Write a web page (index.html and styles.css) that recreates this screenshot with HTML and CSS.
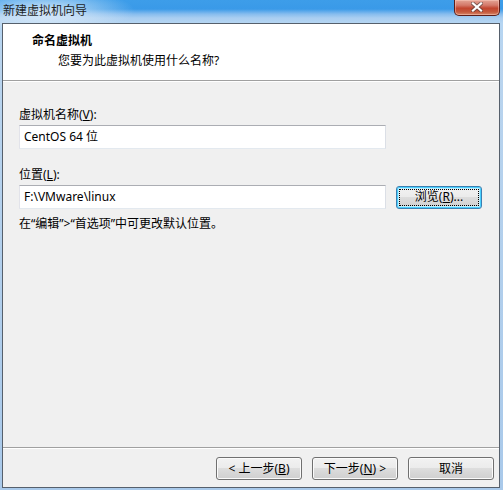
FILE: index.html
```html
<!DOCTYPE html>
<html lang="zh-CN">
<head>
<meta charset="utf-8">
<title>新建虚拟机向导</title>
<link rel="stylesheet" href="styles.css">
</head>
<body>
<div class="window">
  <div class="titlebar">
    <span class="title">新建虚拟机向导</span>
    <div class="close">
      <svg width="12" height="10" viewBox="0 0 12 10">
        <path d="M2 1.5 L10 8.5 M10 1.5 L2 8.5" stroke="#3a3a3a" stroke-width="4" stroke-linecap="square" fill="none" opacity="0.55"/>
        <path d="M2 1.5 L10 8.5 M10 1.5 L2 8.5" stroke="#ffffff" stroke-width="2.2" stroke-linecap="square" fill="none"/>
      </svg>
    </div>
  </div>
  <div class="client">
    <div class="header">
      <div class="h-title">命名虚拟机</div>
      <div class="h-sub">您要为此虚拟机使用什么名称?</div>
    </div>
    <div class="body">
      <div class="lbl">虚拟机名称(<u>V</u>):</div>
      <div class="input wide">CentOS 64 位</div>
      <div class="lbl lbl2">位置(<u>L</u>):</div>
      <div class="row">
        <div class="input wide">F:\VMware\linux</div>
        <div class="btn focus">浏览(<u>R</u>)...</div>
      </div>
      <div class="hint">在“编辑”&gt;“首选项”中可更改默认位置。</div>
    </div>
    <div class="footer">
      <div class="btn">&lt; 上一步(<u>B</u>)</div>
      <div class="btn">下一步(<u>N</u>) &gt;</div>
      <div class="btn">取消</div>
    </div>
  </div>
</div>
</body>
</html>
```
FILE: styles.css
```css
* { box-sizing: border-box; }
html, body { margin: 0; padding: 0; }
body {
  width: 503px;
  height: 490px;
  overflow: hidden;
  font-family: "Noto Sans", "Noto Sans CJK SC", sans-serif;
  font-size: 12px;
  line-height: 16px;
  color: #000;
}
.window {
  width: 503px;
  height: 490px;
  padding: 0 3px 2px 2px;
  display: flex;
  flex-direction: column;
  background:
    radial-gradient(ellipse 90px 22px at 45px 11px, rgba(235,244,252,0.85), rgba(235,244,252,0) 100%),
    linear-gradient(to bottom, #3d9de9 0px, #3a9ae8 9px, #86bcee 14px, #a9cef1 18px, #b5d5f2 23px, #b9d4ee 60px, #a9c9ea 100%);
}
.titlebar {
  height: 23px;
  display: flex;
  justify-content: space-between;
  align-items: flex-start;
  flex: none;
}
.title {
  padding: 3px 0 0 1px;
  color: #1e1e1e;
  line-height: 16px;
}
.close {
  width: 46px;
  height: 16px;
  border: 1px solid #5c1e1a;
  border-top: none;
  border-radius: 0 0 5px 5px;
  background: linear-gradient(to bottom, #e4a495 0%, #d4796a 35%, #c2452f 55%, #c55a3e 80%, #d88a6c 100%);
  box-shadow: inset 0 0 0 1px rgba(255,210,200,0.45);
  display: flex;
  align-items: center;
  justify-content: center;
  padding-bottom: 2px;
}
.close svg { display: block; }
.client {
  flex: 1;
  display: flex;
  flex-direction: column;
  border: 1px solid #56606c;
  background: #f0f0f0;
}
.header {
  height: 57px;
  flex: none;
  background: #fff;
  border-bottom: 1px solid #a0a0a0;
  padding: 9px 0 0 29px;
}
.h-title { font-weight: bold; }
.h-sub { padding-left: 26px; margin-top: 4px; }
.body {
  flex: 1;
  border-top: 1px solid #fff;
  padding: 25px 0 0 16px;
}
.lbl { height: 16px; }
.lbl2 { margin-top: 18px; }
.input {
  height: 24px;
  margin-top: 2px;
  background: #fff;
  border: 1px solid;
  border-color: #abadb3 #dbdfe6 #e3e9ef #e2e3ea;
  padding: 3px 0 0 4px;
  line-height: 16px;
}
.wide { width: 367px; }
.row {
  display: flex;
  align-items: center;
  gap: 10px;
  margin-top: 2px;
}
.row .input { margin-top: 0; }
.btn {
  width: 86px;
  height: 23px;
  border: 1px solid #707070;
  border-radius: 3px;
  background: linear-gradient(to bottom, #f2f2f2 0%, #ebebeb 49%, #dddddd 50%, #cfcfcf 100%);
  box-shadow: inset 0 0 0 1px #fbfbfb;
  display: flex;
  align-items: center;
  justify-content: center;
  line-height: 16px;
  flex: none;
}
.btn.focus {
  border-color: #3c7fb1;
  box-shadow: inset 0 0 0 1px #48d0fe, inset 0 0 0 2px #c0ecfc;
  outline: 1px dotted #000;
  outline-offset: -4px;
}
.hint { margin-top: 7px; }
.footer {
  flex: none;
  height: 40px;
  border-top: 1px solid #a0a0a0;
  box-shadow: inset 0 1px 0 #fff;
  display: flex;
  justify-content: flex-end;
  padding: 9px 5px 0 0;
  gap: 10px;
}
u { text-decoration: underline; text-underline-offset: 1px; }
```
